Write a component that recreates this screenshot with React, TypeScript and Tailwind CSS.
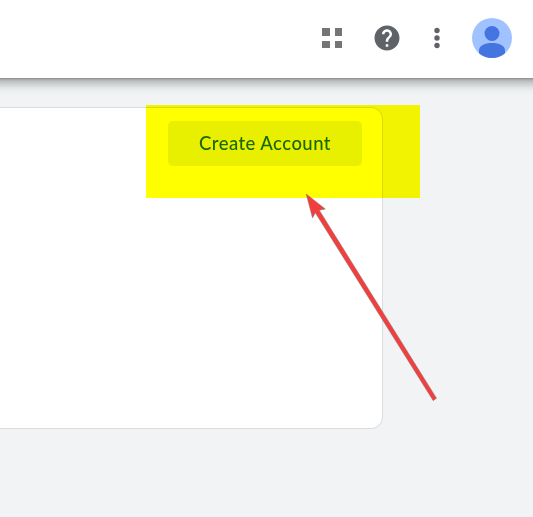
function Header() {
  return (
    <header className="relative flex h-[78px] shrink-0 items-center justify-end bg-white pr-[21px] pb-0.5 shadow-[0_-5px_2px_6px_rgba(60,64,67,0.35),0_-7px_10px_12px_rgba(60,64,67,0.45)]">
      <button aria-label="Apps" className="mr-[30px] grid grid-cols-2 gap-[5px]">
        <span className="size-[7.5px] bg-[#757575]" />
        <span className="size-[7.5px] bg-[#757575]" />
        <span className="size-[7.5px] bg-[#757575]" />
        <span className="size-[7.5px] bg-[#757575]" />
      </button>
      <button aria-label="Help" className="mr-5">
        <svg viewBox="0 0 24 24" className="size-[30px]" fill="#5f6368">
          <path d="M12 2C6.48 2 2 6.48 2 12s4.48 10 10 10 10-4.48 10-10S17.52 2 12 2zm1 17h-2v-2h2v2zm2.07-7.75l-.9.92C13.45 12.9 13 13.5 13 15h-2v-.5c0-1.1.45-2.1 1.17-2.83l1.24-1.26c.37-.36.59-.86.59-1.41 0-1.1-.9-2-2-2s-2 .9-2 2H8c0-2.21 1.79-4 4-4s4 1.79 4 4c0 .88-.36 1.68-.93 2.25z" />
        </svg>
      </button>
      <button aria-label="More" className="mr-5">
        <svg viewBox="0 0 30 30" className="size-[30px]" fill="#5f6368">
          <circle cx="15" cy="7.5" r="2.7" />
          <circle cx="15" cy="15" r="2.7" />
          <circle cx="15" cy="22.5" r="2.7" />
        </svg>
      </button>
      <button aria-label="Profile" className="size-10 overflow-hidden rounded-full bg-[#a0c3ff]">
        <svg viewBox="0 0 40 40" className="size-10" fill="#4374e0">
          <circle cx="20" cy="15.5" r="7.5" />
          <path d="M7 32.5C7 27.5 12.8 25 20 25s13 2.500 13 7.500V40H7z" />
        </svg>
      </button>
    </header>
  );
}

export default function App() {
  return (
    <div className="relative isolate flex h-[517px] w-[533px] flex-col overflow-hidden bg-[#f1f3f4] font-['Lato',sans-serif]">
      <Header />
      <main className="pt-[29px]">
        <section className="relative flex h-[322px] w-[383px] items-start justify-end rounded-r-xl border border-l-0 border-[#dadce0] bg-white pt-[13px] pr-5">
          <button className="h-[45px] w-[194px] rounded-[5px] bg-[#e8f0fe] pt-px text-[18.5px] font-medium tracking-[0.45px] text-[#1967d2]">
            Create Account
          </button>
        </section>
      </main>
      <div className="pointer-events-none absolute top-[105px] left-[146px] h-[93px] w-[274px] bg-[#ffff00] mix-blend-multiply" />
      <svg className="pointer-events-none absolute inset-0" width="533" height="517" viewBox="0 0 533 517">
        <g stroke="#777b7d" strokeWidth="0.5" fill="#f43e3d" strokeLinejoin="round">
          <path d="M306.200 194L325.300 209L319.300 210.200L436.500 398.200L433.200 400.700L315.300 212.800L312.500 218Z" />
        </g>
      </svg>
    </div>
  );
}
